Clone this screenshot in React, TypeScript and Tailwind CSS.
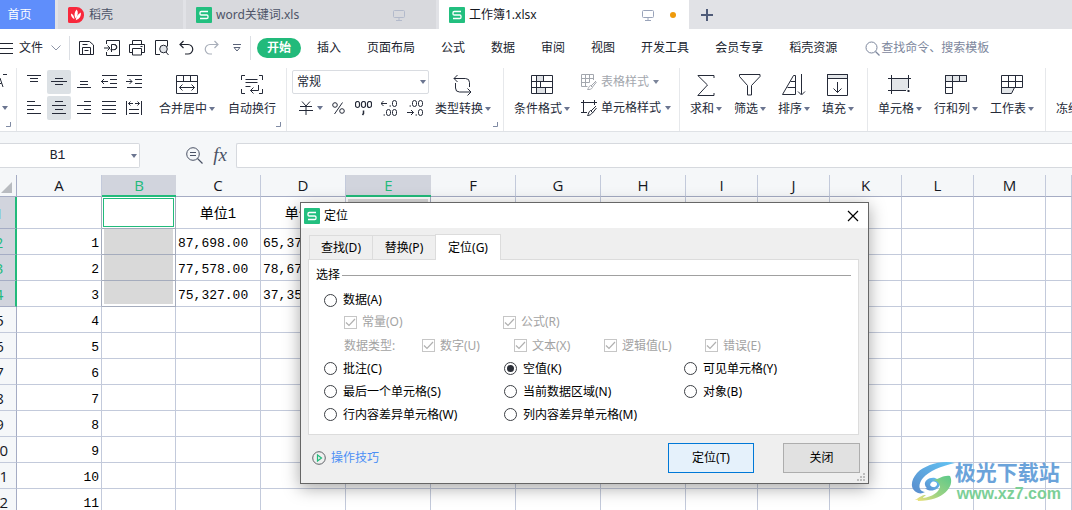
import React, { useState } from "react";

type DrawProps = { w: number; h: number; className?: string; children: React.ReactNode };

function Draw({ w, h, className = "", children }: DrawProps) {
  return (
    <svg
      width={w}
      height={h}
      viewBox={`0 0 ${w} ${h}`}
      fill="none"
      stroke="currentColor"
      strokeWidth="1"
      aria-hidden="true"
      className={`shrink-0 ${className}`}
    >
      {children}
    </svg>
  );
}

const Caret = ({ className = "" }: { className?: string }) => (
  <svg width="6" height="4" viewBox="0 0 6 4" aria-hidden="true" className={`shrink-0 ${className || "text-[#6b7590]"}`}>
    <path d="M0 0h6L3 4z" fill="currentColor" />
  </svg>
);

const Logo = () => (
  <svg width="16" height="16" viewBox="0 0 16 16" aria-hidden="true" className="shrink-0">
    <rect width="16" height="16" rx="1" fill="#22bf7f" />
    <path d="M12 4.5H5.2Q4 4.5 4 5.7V7Q4 8 5.2 8H10.8Q12 8 12 9.2v1.1q0 1.2-1.2 1.2H4" fill="none" stroke="#fff" strokeWidth="1.3" />
  </svg>
);

const Monitor = ({ className = "" }: { className?: string }) => (
  <Draw w={12} h={12} className={className}>
    <rect x=".5" y="1.500" width="11" height="7" rx="1" />
    <path d="M6 8.500v2.500M3 11.500h6" />
  </Draw>
);

function TabBar() {
  return (
    <nav aria-label="文档" className="flex h-[29px] items-stretch bg-[#e1e2e6] text-[#4d5468]">
      <button className="w-[55px] bg-[#5f8efb] pr-4 text-white">首页</button>
      <button className="ml-[3px] flex w-[125px] items-center gap-1 bg-[#d8d9dd] pl-[10px]">
        <svg width="16" height="16" viewBox="0 0 16 16" aria-hidden="true">
          <path d="M1.500 0h7A7.500 7.500 0 0 1 16 7.500V8.500A7.500 7.500 0 0 1 8.500 16H1.500A1.500 1.500 0 0 1 0 14.500V1.500A1.500 1.500 0 0 1 1.500 0z" fill="#f8283c" />
          <path d="M8.700 2.500c1.800 2.400 1.400 5.700-1.200 9C5.900 8.300 6.300 5 8.700 2.500zM3 6.500c2 .8 3.200 2.600 3.500 5.800C4.300 11.300 2.800 9.300 3 6.500zM12.800 5.500c.5 3.500-1 6.300-5 7.700C8 10 9.800 7 12.800 5.500z" fill="#fff" />
        </svg>
        <span className="pl-px">稻壳</span>
      </button>
      <button className="ml-[3px] flex w-[250px] items-center gap-1 bg-[#d8d9dd] pl-[10px] pr-[31px]">
        <Logo />
        <span>word关键词.xls</span>
        <Monitor className="ml-auto text-[#b3bacb]" />
      </button>
      <button className="ml-[3px] flex w-[250px] items-center gap-1 bg-white pl-[10px] pr-[13px] text-[#15181f]">
        <Logo />
        <span>工作簿1.xlsx</span>
        <Monitor className="ml-auto text-[#9aa4ba]" />
        <span className="ml-3 size-[6px] rounded-full bg-[#ee9a0b]" />
      </button>
      <button aria-label="新建" className="ml-3 text-[#4f5b78]">
        <Draw w={12} h={12}>
          <path d="M6 0v12M0 6h12" strokeWidth="2" />
        </Draw>
      </button>
    </nav>
  );
}

function MenuRow() {
  const menus = ["插入", "页面布局", "公式", "数据", "审阅", "视图", "开发工具", "会员专享", "稻壳资源"];
  return (
    <div className="flex h-[37px] items-center overflow-hidden bg-white pt-px text-[#20242f]">
      <Draw w={13} h={11}>
        <path d="M0 .5h13M0 5.500h13M0 10.500h13" />
      </Draw>
      <button className="ml-[6px] flex shrink-0 items-center gap-2">
        文件
        <Draw w={10} h={6} className="text-[#8c94a6]">
          <path d="M.5.500 5 5 9.500.500" />
        </Draw>
      </button>
      <span className="ml-2 h-6 w-px shrink-0 bg-[#dcdfe4]" />
      <div className="ml-[9px] flex shrink-0 items-center gap-[9px]">
        <button aria-label="保存">
          <Draw w={16} h={16}>
            <path d="M.5 1.500h10L14.500 5v9.500H.5zM3.500 14.500v-7h8v7M3.500 4.500h5M5.500 10.500h4" />
          </Draw>
        </button>
        <button aria-label="输出为PDF">
          <Draw w={16} h={16}>
            <path d="M2.500 4V.5h13v15h-13V12M0 8h5.500M3.500 5.500 6 8 3.500 10.500M7.500 12V4.500H10a2.600 2.600 0 0 1 0 5.200H6.500M10.500 4.500c3 0 3 5.200 0 5.200" />
          </Draw>
        </button>
        <button aria-label="打印">
          <Draw w={16} h={16}>
            <path d="M3.500 4.500v-4h9v4M3.500 12.500h-3v-8h15v8h-3M3.500 8.500h9v6.500h-9zM11.500 6.500h2" />
          </Draw>
        </button>
        <button aria-label="打印预览">
          <Draw w={16} h={16}>
            <path d="M6 14.500H1.500V.5h12v6M14.500 15 12 12" />
            <circle cx="9.500" cy="9" r="3.800" fill="#e3e6ea" />
          </Draw>
        </button>
        <button aria-label="撤销">
          <Draw w={16} h={16}>
            <path d="M4.500 1 1 4.500 4.500 8M1.500 4.500H9a4.700 4.700 0 0 1 0 9.500H6" strokeWidth="1.200" />
          </Draw>
        </button>
        <button aria-label="恢复" className="text-[#a9afba]">
          <Draw w={16} h={16}>
            <path d="M10.500 1 14 4.500 10.500 8M13.500 4.500H6A4.700 4.700 0 0 0 6 14h2" strokeWidth="1.200" />
          </Draw>
        </button>
        <button aria-label="自定义" className="ml-1 text-[#5a6378]">
          <Draw w={8} h={8}>
            <path d="M0 .5h8M1 3.500h6L4 7z" />
          </Draw>
        </button>
      </div>
      <span className="ml-[9px] h-6 w-px shrink-0 bg-[#dcdfe4]" />
      <button className="ml-[6px] h-5 w-11 shrink-0 rounded-full bg-[#22ba7b] font-bold text-white">开始</button>
      <div className="ml-4 flex shrink-0 gap-[26px]">
        {menus.map((m) => (
          <button key={m}>{m}</button>
        ))}
      </div>
      <button className="ml-7 flex shrink-0 items-center gap-px text-[#7d879d]">
        <Draw w={15} h={15}>
          <circle cx="6.500" cy="6.500" r="5.500" />
          <path d="m10.500 10.500 4 4" strokeWidth="1.300" />
        </Draw>
        查找命令、搜索模板
      </button>
    </div>
  );
}

const alignIcons: { label: string; d: string; active?: boolean }[] = [
  { label: "顶端对齐", d: "M1 1.500h14M4 4.500h8M4 7.500h8" },
  { label: "垂直居中", d: "M4 4.500h8M0 7.500h16M4 10.500h8", active: true },
  { label: "底端对齐", d: "M4 7.500h8M4 10.500h8M1 13.500h14" },
  { label: "减少缩进", d: "M1 1.500h15M9 5.500h7M9 9.500h7M1 13.500h15M0 7.500h7M3 5 .5 7.500 3 10" },
  { label: "增加缩进", d: "M1 1.500h15M9 5.500h7M9 9.500h7M1 13.500h15M0 7.500h6M3.500 5 6 7.500 3.500 10" },
  { label: "左对齐", d: "M1 1.500h8M1 5.500h14M1 9.500h7M1 13.500h14" },
  { label: "水平居中", d: "M4 1.500h8M1 5.500h14M4 9.500h8M1 13.500h14", active: true },
  { label: "右对齐", d: "M8 1.500h7M1 5.500h14M8 9.500h7M1 13.500h14" },
  { label: "两端对齐", d: "M1 1.500h14M1 5.500h14M1 9.500h14M1 13.500h14" },
  { label: "分散对齐", d: "M.5 1v14M15.500 1v14M3 9.500h10M3 13.500h10M2.500 3.500H7M9 3.500h4.500M4.500 1.500l-2 2 2 2M11.500 1.500l2 2-2 2" },
];

function BigButton({ label, icon, caret = true }: { label: string; icon: React.ReactNode; caret?: boolean }) {
  return (
    <button className="flex shrink-0 flex-col items-center pt-[4px]">
      <span className="flex h-[22px] items-center">{icon}</span>
      <span className="mt-[5px] flex items-center gap-[2px] whitespace-nowrap leading-4">
        {label}
        {caret && <Caret />}
      </span>
    </button>
  );
}

function Group({ children, className = "", corner = false }: { children?: React.ReactNode; className?: string; corner?: boolean }) {
  return (
    <div className={`relative flex shrink-0 border-r border-[#e6e8eb] pt-[2px] ${className}`}>
      {children}
      {corner && (
        <Draw w={5} h={5} className="absolute bottom-1 right-[5px] text-[#7f8aa3]">
          <path d="M0 4.500h4.500V0" />
        </Draw>
      )}
    </div>
  );
}

function Ribbon() {
  return (
    <div className="flex h-[66px] overflow-hidden border-b border-[#dfe2e6] bg-white pt-[2px] text-[#252a38]">
      <Group className="w-[17px]" corner>
        <div className="flex flex-col pt-1">
          <Draw w={8} h={14}>
            <path d="M0 4 3 13M3 .5h4M0 9.500h1.500" />
          </Draw>
          <Caret className="mt-[18px] ml-[2px] text-[#6b7590]" />
        </div>
      </Group>
      <Group className="w-[270px] pl-[5px]" corner>
        <div className="grid grid-cols-[repeat(5,24px)] grid-rows-[24px_24px] gap-x-px gap-y-[2px]">
          {alignIcons.map((a) => (
            <button
              key={a.label}
              aria-label={a.label}
              className={`grid place-items-center rounded-[2px] ${a.active ? "bg-[#dce1e5]" : ""}`}
            >
              <Draw w={16} h={16}>
                <path d={a.d} />
              </Draw>
            </button>
          ))}
        </div>
        <div className="ml-[13px] flex items-start gap-[13px]">
          <BigButton
            label="合并居中"
            icon={
              <Draw w={22} h={20}>
                <path d="M.5.500h21v18H.5zM.5 6.500h21M7.500.500v6M14.500.500v6M3.500 12.500h15M6.500 9.500l-3 3 3 3M15.500 9.500l3 3-3 3" />
              </Draw>
            }
          />
          <BigButton
            label="自动换行"
            caret={false}
            icon={
              <Draw w={22} h={20}>
                <path d="M4 .5H.5V5M18 .5h3.500V5M4 18.500H.5V14M18 18.500h3.500V14M4.500 4.500h12M4.500 7.500h12M4.500 11.500h5M17.500 10v5.500h-8M12.500 12.500l-3 3 3 3" />
              </Draw>
            }
          />
        </div>
      </Group>
      <Group className="w-[217px] pl-[5px]" corner>
        <div className="w-[137px]">
          <div className="relative h-6">
            <select aria-label="数字格式" className="h-6 w-full appearance-none rounded-[2px] border border-[#d9dce1] bg-white pl-1 leading-4">
              <option>常规</option>
            </select>
            <Caret className="pointer-events-none absolute right-[3px] top-[10px] text-[#6b7590]" />
          </div>
          <div className="mt-[2px] flex h-6 items-center justify-between pl-[7px] pr-[5px]">
            <button aria-label="货币" className="flex items-center gap-[4px]">
              <Draw w={14} h={14}>
                <path d="M3 .5 7 5 11 .5M1 5.500h12M0 9.500h14M7 5v9" />
              </Draw>
              <Caret />
            </button>
            <button aria-label="百分比">
              <Draw w={13} h={14}>
                <circle cx="3" cy="4" r="2.300" />
                <circle cx="10" cy="10" r="2.300" />
                <path d="M10.500 1.500 2.500 13" />
              </Draw>
            </button>
            <button aria-label="千位分隔">
              <Draw w={17} h={15}>
                <rect x=".5" y=".5" width="4" height="6" rx="2" strokeWidth="1.200" />
                <rect x="6.500" y=".5" width="4" height="6" rx="2" strokeWidth="1.200" />
                <rect x="12.500" y=".5" width="4" height="6" rx="2" strokeWidth="1.200" />
                <path d="M8.500 9.500v3l-1 1.500" strokeWidth="1.500" />
              </Draw>
            </button>
            <button aria-label="增加小数位">
              <Draw w={17} h={16}>
                <path d="M0 3.500h6M2.500 1 0 3.500 2.500 6M8.500 6h1.500M2.500 15H4" />
                <rect x="11.500" y=".5" width="4" height="6" rx="2" />
                <rect x="5.500" y="9.500" width="4" height="6" rx="2" />
                <rect x="11.500" y="9.500" width="4" height="6" rx="2" />
              </Draw>
            </button>
            <button aria-label="减少小数位">
              <Draw w={17} h={16}>
                <path d="M2.500 6H4M0 12.500h6.500M4 10l2.500 2.500L4 15M8.500 15h1.500" />
                <rect x="5.500" y=".5" width="4" height="6" rx="2" />
                <rect x="11.500" y=".5" width="4" height="6" rx="2" />
                <rect x="11.500" y="9.500" width="4" height="6" rx="2" />
              </Draw>
            </button>
          </div>
        </div>
        <div className="ml-[6px]">
          <BigButton
            label="类型转换"
            icon={
              <Draw w={20} h={22}>
                <path d="M1 4.500h11.500a4 4 0 0 1 4 4V13M4.500 1 1 4.500 4.500 8M2.500 9v5a4 4 0 0 0 4 4H18M14.500 14.500 18 18l-3.500 3.500" />
              </Draw>
            }
          />
        </div>
      </Group>
      <Group className="w-[176px] pl-[10px]">
        <BigButton
          label="条件格式"
          icon={
            <Draw w={22} h={20}>
              <path d="M5.500.500h7v6h-7zM5.500 12.500h9v6h-9z" fill="#dfe2e6" />
              <path d="M.5.500h21v18H.5zM.5 6.500h21M.5 12.500h21M5.500.500v18M12.500.500v6M9.500 6.500v6M14.500 12.500v6" />
            </Draw>
          }
        />
        <div className="ml-[11px] flex flex-col gap-[2px]">
          <button className="flex h-6 items-center gap-1 text-[#a3a7ae]">
            <Draw w={16} h={16}>
              <path d="M12.500 6V.5H.5v12h6M.5 4.500h12M.5 8.500h8M4.500.500v12M8.500.500v8M15 7l-5 5M15.500 8l-4 5M9.500 11.500l2 2c-1 2-3 2-5 2 1-1 1-3 3-4z" />
            </Draw>
            <span>表格样式</span>
            <Caret className="text-[#7b849a]" />
          </button>
          <button className="flex h-6 items-center gap-1">
            <Draw w={16} h={16}>
              <path d="M0 2.500h16M2.500 0v13M0 12.500h6M13.500 0v5M15 6l-5 5M15.500 8l-4 5M9.500 10.500l2 2c-1 2-3 3-5 3 1-1 1-4 3-5z" />
            </Draw>
            <span>单元格样式</span>
            <Caret />
          </button>
        </div>
      </Group>
      <Group className="w-[188px] gap-3 pl-[10px]">
        <BigButton
          label="求和"
          icon={
            <Draw w={18} h={21}>
              <path d="M17 3V.500H.800L10.500 10 .800 20.500H17V18" />
            </Draw>
          }
        />
        <BigButton
          label="筛选"
          icon={
            <Draw w={22} h={22}>
              <path d="M.5.500h20.500v2L12.500 11.500v9.500h-4V11.500L.5 2.500z" />
            </Draw>
          }
        />
        <BigButton
          label="排序"
          icon={
            <Draw w={24} h={22}>
              <path d="M13.500 20.500V1.500h-2L.5 20.500zM8.500 7.500h5M5.500 13.500h8M19.500 0v20M16 17.500l3.500 3.500 3.500-3.500" />
            </Draw>
          }
        />
        <BigButton
          label="填充"
          icon={
            <Draw w={22} h={22}>
              <path d="M.5.500h20v4H.5z" fill="#e3e6e9" />
              <path d="M.5.500h20v21H.5zM10.500 8v10.500M6.500 14.500l4 4 4-4" />
            </Draw>
          }
        />
      </Group>
      <Group className="w-[178px] gap-3 pl-[10px]">
        <BigButton
          label="单元格"
          icon={
            <Draw w={24} h={20}>
              <path d="M3.500 3.500h17v12h-17z" fill="#e3e6e9" stroke="none" />
              <path d="M0 3.500h23M3.500 0v19M0 15.500h18M20.500 0v13" />
              <path d="M20.500 15v2" strokeWidth="2" />
            </Draw>
          }
        />
        <BigButton
          label="行和列"
          icon={
            <Draw w={22} h={20}>
              <path d="M.5.500h21v6H.5z" fill="#e3e6e9" />
              <path d="M.5.500h21v6h-14v12h-7zM7.500.500v6M14.500.500v6M.5 6.500h7M.5 12.500h7" />
            </Draw>
          }
        />
        <BigButton
          label="工作表"
          icon={
            <Draw w={22} h={20}>
              <path d="M.5 12.500h13l-3 6H.5z" fill="#e3e6e9" />
              <path d="M.5.500h21v12H.5zM7.500.500v12M14.500.500v12M.5 6.500h21" />
            </Draw>
          }
        />
      </Group>
      <div className="flex shrink-0 pl-[10px] pt-[2px]">
        <BigButton label="冻结窗格" icon={null} />
      </div>
    </div>
  );
}

function FormulaBar() {
  return (
    <div className="flex h-[43px] items-center overflow-hidden bg-[#f5f7f9] pt-[3px] text-[#4a5265]">
      <div className="relative shrink-0">
        <input
          aria-label="名称框"
          defaultValue="B1"
          className="block h-[25px] w-[140px] rounded-r-[2px] border border-l-0 border-[#d6d9de] bg-white pr-6 text-center font-['Liberation_Mono',monospace] text-[13px] text-[#20242f]"
        />
        <Caret className="pointer-events-none absolute right-[3px] top-[11px] text-[#6b7590]" />
      </div>
      <button aria-label="浏览公式结果" className="ml-[46px]">
        <Draw w={17} h={17}>
          <circle cx="7" cy="7" r="6.300" />
          <path d="M4 5.500h6M4 8.500h6M11.500 11.500 16.500 16.500" strokeWidth="1.200" />
        </Draw>
      </button>
      <button aria-label="插入函数" className="ml-2 h-6 w-[18px] font-['Liberation_Serif',serif] text-[19px] italic leading-5">
        fx
      </button>
      <input aria-label="编辑栏" className="ml-[7px] h-[25px] min-w-0 flex-1 rounded-l-[2px] border border-r-0 border-[#d6d9de] bg-white" />
    </div>
  );
}

const columns = ["A", "B", "C", "D", "E", "F", "G", "H", "I", "J", "K", "L", "M", ""];
const colWidths = [34, 85, 74, 85, 85, 85, 85, 85, 85, 72, 72, 72, 72, 72];
const sheet: Record<number, string[]> = {
  1: ["", "", "单位1", "单位2"],
  2: ["1", "", "87,698.00", "65,37"],
  3: ["2", "", "77,578.00", "78,67"],
  4: ["3", "", "75,327.00", "37,35"],
};

function Cell({ row, col }: { row: number; col: number }) {
  const value = sheet[row]?.[col] ?? (col === 0 ? String(row - 1) : "");
  const picked = row <= 4 && (col === 1 || col === 4);
  const base = "overflow-hidden whitespace-nowrap border-r border-b p-0 align-bottom";
  if (picked) {
    const current = row === 1 && col === 1;
    return (
      <td className={`${base} border-r-[#a5acbd] border-b-[#a5acbd]`}>
        <div
          className={
            current
              ? "m-px h-[29px] border border-[#22ba7b] bg-white"
              : row === 1
                ? "mx-[2px] mt-[2px] h-[29px] bg-[#d9d9d9]"
                : row === 4
                  ? "mx-[2px] mb-[2px] h-[23px] bg-[#d9d9d9]"
                  : "mx-[2px] h-[25px] bg-[#d9d9d9]"
          }
        />
      </td>
    );
  }
  return (
    <td className={`${base} border-[#c3cadb] ${col === 0 && row <= 4 ? "border-r-[#a5acbd]" : ""}`}>
      <div
        className={
          row === 1
            ? "h-[31px] text-center text-[14px] leading-[34px]"
            : col === 0
              ? "h-[25px] pr-[2px] text-right leading-[30px]"
              : "h-[25px] pl-[2px] leading-[30px]"
        }
      >
        {value}
      </div>
    </td>
  );
}

function Grid() {
  return (
    <div className="overflow-hidden bg-white">
      <table className="-ml-[17px] w-[calc(100%+17px)] table-fixed border-separate border-spacing-0 font-['Liberation_Mono','Noto_Sans_CJK_SC',monospace] text-[13px] text-black">
        <colgroup>
          {colWidths.map((w, i) => (
            <col key={i} style={{ width: w }} />
          ))}
          <col />
        </colgroup>
        <thead>
          <tr className="h-[22px] bg-[#f5f7f9] font-['Open_Sans',sans-serif] text-[15px] text-[#15181f]">
            <th className="border-r border-b border-[#a5acc4] p-0" aria-label="全选">
              <svg width="11" height="11" viewBox="0 0 11 11" className="ml-auto mr-1 mt-1" aria-hidden="true">
                <path d="M11 0v11H0z" fill="#b8bbc0" />
              </svg>
            </th>
            {columns.map((c, i) => (
              <th
                key={i}
                className={`p-0 align-top font-normal leading-5 ${
                  c === "B" || c === "E"
                    ? "border-b-2 border-[#22ba7b] bg-[#d1d4dd] text-[#22ba7b]"
                    : "border-r border-b border-r-[#c3cadb] border-b-[#a5acc4]"
                }`}
              >
                {c}
              </th>
            ))}
          </tr>
        </thead>
        <tbody>
          {Array.from({ length: 12 }, (_, i) => i + 1).map((row) => (
            <tr key={row}>
              <th
                scope="row"
                className={`p-0 text-center font-['Open_Sans',sans-serif] text-[15px] font-normal leading-5 ${
                  row <= 4
                    ? "border-r-2 border-b border-r-[#22ba7b] border-b-[#a5acc4] bg-[#d1d4dd] text-[#22ba7b]"
                    : "border-r border-b border-r-[#a5acc4] border-b-[#c3cadb] bg-[#f5f7f9] text-[#15181f]"
                }`}
              >
                {row}
              </th>
              {columns.map((_, col) => (
                <Cell key={col} row={row} col={col} />
              ))}
            </tr>
          ))}
        </tbody>
      </table>
    </div>
  );
}

function Radio({ label, value, onPick }: { label: string; value: string; onPick: (v: string) => void }) {
  return (
    <label className="flex items-center gap-[6px] whitespace-nowrap">
      <span className="grid place-items-center">
        <input
          type="radio"
          name="target"
          checked={value === label}
          onChange={() => onPick(label)}
          className="peer size-[13px] appearance-none rounded-full border border-[#3c3f45] bg-white [grid-area:1/1]"
        />
        <span className="hidden size-[7px] rounded-full bg-[#2b2f38] [grid-area:1/1] peer-checked:block" />
      </span>
      {label}
    </label>
  );
}

function Check({ label }: { label: string }) {
  return (
    <label className="flex items-center gap-[5px] whitespace-nowrap">
      <span className="grid place-items-center">
        <input
          type="checkbox"
          defaultChecked
          disabled
          className="size-[13px] appearance-none border border-[#c6c6c6] bg-white [grid-area:1/1]"
        />
        <Draw w={11} h={9} className="text-[#b0b0b0] [grid-area:1/1]">
          <path d="m1 4.500 3 3L10 1" strokeWidth="1.200" />
        </Draw>
      </span>
      {label}
    </label>
  );
}

function Dialog() {
  const [value, setValue] = useState("空值(K)");
  const radio = (label: string) => <Radio label={label} value={value} onPick={setValue} />;
  return (
    <section
      role="dialog"
      aria-label="定位"
      className="absolute left-[300px] top-[202px] w-[569px] border border-[#666] bg-[#efefef] leading-4 text-black shadow-[0_4px_16px_rgba(0,0,0,0.35)]"
    >
      <header className="flex h-[25px] items-center gap-1 bg-white pl-[3px] pr-[9px]">
        <Logo />
        <span>定位</span>
        <button aria-label="关闭窗口" className="ml-auto">
          <Draw w={12} h={12}>
            <path d="m1 1 10 10M11 1 1 11" strokeWidth="1.200" />
          </Draw>
        </button>
      </header>
      <div className="px-[7px] pt-[6px]">
        <div role="tablist" className="flex items-end pl-px">
          <button role="tab" aria-selected="false" className="h-6 w-[63px] border border-r-0 border-b-0 border-[#dcdcdc] pt-px">
            查找(D)
          </button>
          <button role="tab" aria-selected="false" className="h-6 w-[63px] border border-r-0 border-b-0 border-[#dcdcdc] pt-px">
            替换(P)
          </button>
          <button role="tab" aria-selected="true" className="z-10 -mb-px h-[26px] w-[66px] border border-b-0 border-[#dcdcdc] bg-white">
            定位(G)
          </button>
        </div>
        <div role="tabpanel" className="mr-[2px] border border-[#dcdcdc] bg-white pb-2 pt-[3px]">
          <div className="flex h-6 items-center gap-[2px] pl-[7px] pr-[7px]">
            选择
            <span className="h-px flex-1 bg-[#a0a0a0]" />
          </div>
          <div className="flex h-6 items-center pl-[15px] pt-[2px]">{radio("数据(A)")}</div>
          <div className="text-[#a3a3a3]">
            <div className="flex h-[22px] items-center pl-[35px]">
              <div className="w-[159px]">
                <Check label="常量(O)" />
              </div>
              <Check label="公式(R)" />
            </div>
            <div className="grid h-6 grid-cols-[78px_92px_90px_101px_auto] items-center pl-[35px] pt-px">
              <span>数据类型:</span>
              <Check label="数字(U)" />
              <Check label="文本(X)" />
              <Check label="逻辑值(L)" />
              <Check label="错误(E)" />
            </div>
          </div>
          <div className="grid auto-rows-[23px] grid-cols-[180px_180px_auto] items-center pl-[15px]">
            {radio("批注(C)")}
            {radio("空值(K)")}
            {radio("可见单元格(Y)")}
            {radio("最后一个单元格(S)")}
            {radio("当前数据区域(N)")}
            {radio("对象(B)")}
            {radio("行内容差异单元格(W)")}
            {radio("列内容差异单元格(M)")}
          </div>
        </div>
      </div>
      <footer className="flex items-center pb-[10px] pl-[11px] pr-2 pt-2">
        <a href="#tips" className="mr-auto flex items-center gap-[5px] text-[#4c8ff5]">
          <Draw w={14} h={14} className="text-[#5f6368]">
            <circle cx="7" cy="7" r="6.300" />
            <path d="M5.500 4v6L9.500 7z" stroke="#22ba7b" strokeWidth="1.200" />
          </Draw>
          操作技巧
        </a>
        <button className="h-[30px] w-[86px] border border-[#0078d7] bg-[#e5f1fb]">定位(T)</button>
        <button className="ml-[29px] h-[30px] w-[77px] border border-[#adadad] bg-[#e1e1e1]">关闭</button>
      </footer>
      <svg width="8" height="8" viewBox="0 0 8 8" aria-hidden="true" className="absolute bottom-[2px] right-[3px]">
        <path d="M6 0h2v2H6zM3 3h2v2H3zM6 3h2v2H6zM0 6h2v2H0zM3 6h2v2H3zM6 6h2v2H6z" fill="#bdbdbd" />
      </svg>
    </section>
  );
}

function Watermark() {
  return (
    <div className="absolute bottom-[6px] right-[11px] flex items-center">
      <svg width="44" height="42" viewBox="0 0 44 42" aria-hidden="true">
        <defs>
          <linearGradient id="wmBlue" x1="1" y1="0" x2="0" y2="1">
            <stop offset="0" stopColor="#62c4f4" />
            <stop offset="1" stopColor="#5a8ccc" />
          </linearGradient>
          <linearGradient id="wmGreen" x1="1" y1="0" x2="0" y2="1">
            <stop offset="0" stopColor="#5cc98a" />
            <stop offset=".55" stopColor="#9bd283" />
            <stop offset="1" stopColor="#f3e27a" />
          </linearGradient>
        </defs>
        <path d="M44 2C30-1 14 4 6 12-1 20-1 29 7 32c3 1 5 0 7-1C7 30 7 23 12 17 18 10 30 5 44 2z" fill="url(#wmBlue)" />
        <path
          d="M24 17c-6-1-11 3-10 7 1 5 7 5 9 2-3 0-5-2-3-4 2-3 6-1 6 1 0 3-5 5-12 4 5 5 14 2 15-4 0-3-2-5-5-6z"
          fill="url(#wmBlue)"
        />
        <path d="M22 19c7-1 10-5 17-4 5 10-6 25-32 25 0-2-2-1-3-1 5-3 7-5 11-5-1 1-3 2-3 3 9-1 16-6 17-11 0-3-2-6-7-7z" fill="url(#wmGreen)" />
      </svg>
      <div className="text-[21px] font-bold leading-6 text-[#6ba3da]">
        <div>极光下载站</div>
        <div className="pl-[2px] font-['Liberation_Sans',sans-serif] text-[16px] leading-5 text-[#7ccf97]">www.xz7.com</div>
      </div>
    </div>
  );
}

export default function App() {
  return (
    <main className="relative h-screen w-full overflow-hidden bg-white font-['Noto_Sans','Noto_Sans_CJK_SC',sans-serif] text-[12px] leading-4">
      <TabBar />
      <MenuRow />
      <Ribbon />
      <FormulaBar />
      <Grid />
      <Dialog />
      <Watermark />
    </main>
  );
}
